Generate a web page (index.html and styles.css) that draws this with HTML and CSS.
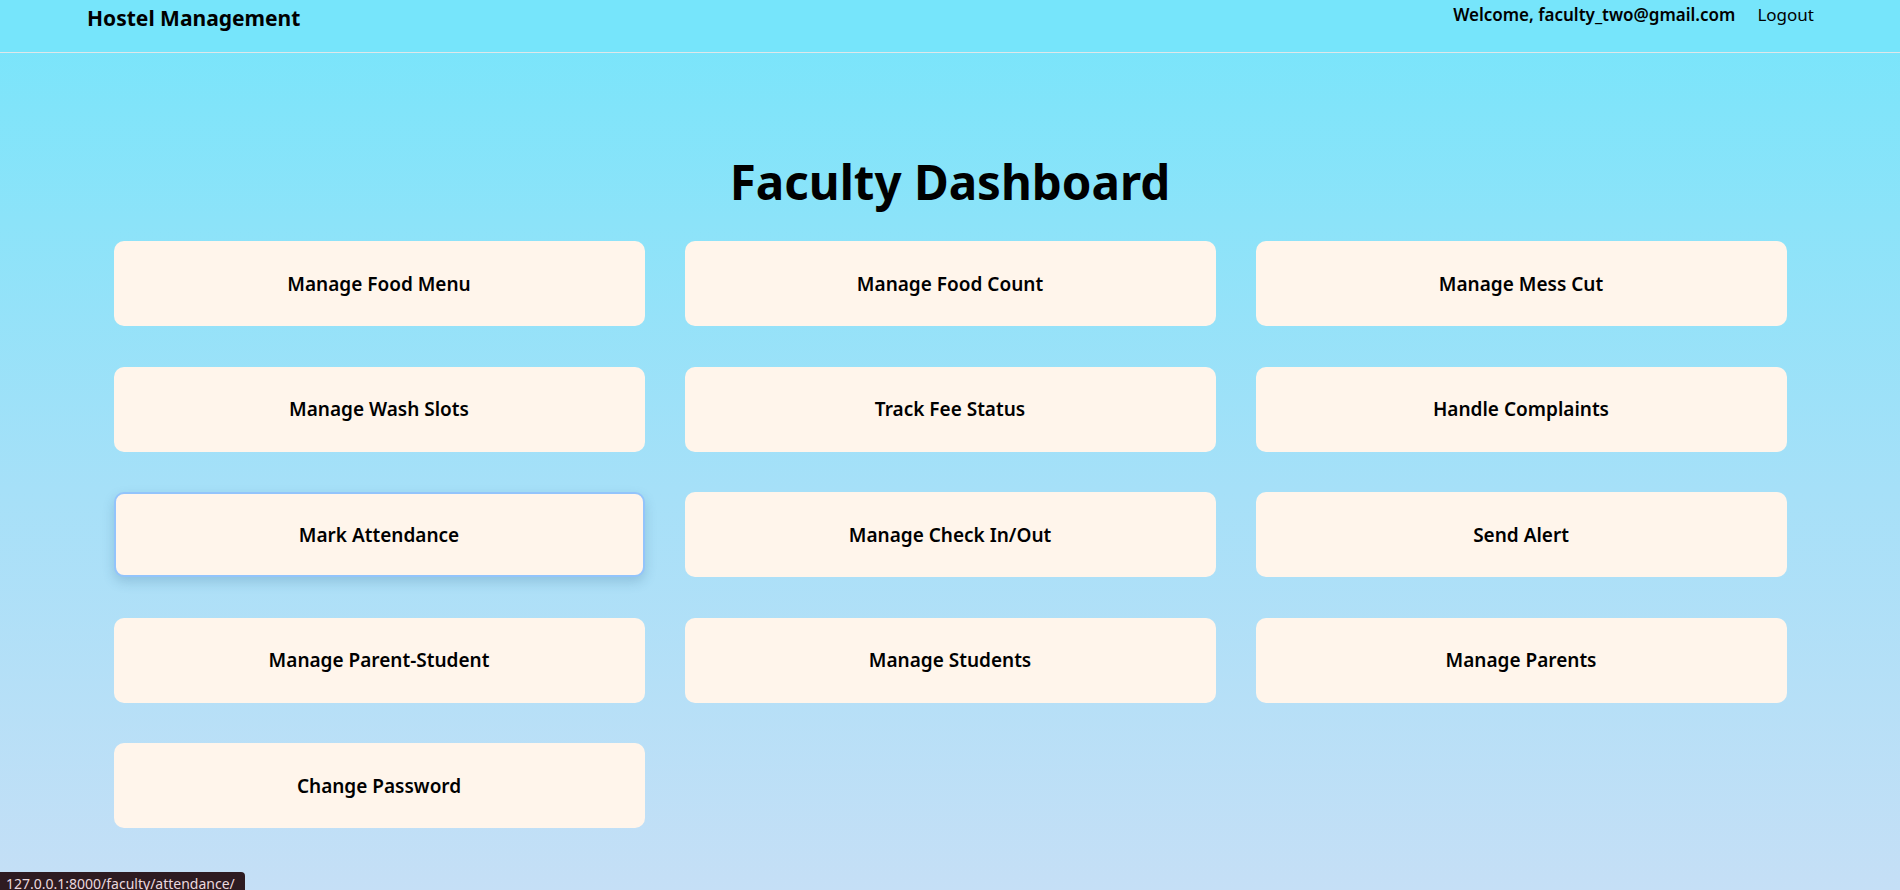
FILE: index.html
```html
<!DOCTYPE html>
<html lang="en">
<head>
<meta charset="utf-8">
<title>Faculty Dashboard</title>
<link rel="stylesheet" href="styles.css">
</head>
<body>
<header class="navbar">
  <a class="brand" href="#">Hostel Management</a>
  <nav class="nav-right">
    <span class="welcome">Welcome, faculty_two@gmail.com</span>
    <a class="logout" href="#">Logout</a>
  </nav>
</header>
<main class="main">
  <h1 class="title">Faculty Dashboard</h1>
  <div class="grid">
    <a class="card" href="#">Manage Food Menu</a>
    <a class="card" href="#">Manage Food Count</a>
    <a class="card" href="#">Manage Mess Cut</a>
    <a class="card" href="#">Manage Wash Slots</a>
    <a class="card" href="#">Track Fee Status</a>
    <a class="card" href="#">Handle Complaints</a>
    <a class="card card-hover" href="#">Mark Attendance</a>
    <a class="card" href="#">Manage Check In/Out</a>
    <a class="card" href="#">Send Alert</a>
    <a class="card" href="#">Manage Parent-Student</a>
    <a class="card" href="#">Manage Students</a>
    <a class="card" href="#">Manage Parents</a>
    <a class="card" href="#">Change Password</a>
  </div>
</main>
<div class="status">127.0.0.1:8000/faculty/attendance/</div>
</body>
</html>
```
FILE: styles.css
```css
html, body {
  margin: 0;
  padding: 0;
}
body {
  min-height: 100vh;
  font-family: "Noto Sans", "Open Sans", sans-serif;
  color: #000;
  background: linear-gradient(to bottom, #76e5fb 0%, #8ce3f9 25%, #a6e0f8 55%, #c5dff6 100%);
  overflow: hidden;
}
a {
  color: inherit;
  text-decoration: none;
}
.navbar {
  height: 53px;
  box-sizing: border-box;
  border-bottom: 1px solid #dfe7ea;
  display: flex;
  justify-content: space-between;
  align-items: flex-start;
  padding: 3px 86px 0 87px;
  background: #76e5fb;
}
.brand {
  font-size: 21px;
  font-weight: 700;
  line-height: 30px;
}
.nav-right {
  display: flex;
  gap: 22px;
  font-size: 17px;
  line-height: 24px;
}
.welcome {
  font-weight: 600;
}
.logout {
  font-weight: 400;
}
.main {
  padding-top: 93px;
}
.title {
  margin: 0 0 24px;
  text-align: center;
  font-size: 47.5px;
  font-weight: 700;
  line-height: 71px;
}
.grid {
  width: 1673px;
  margin: 0 auto;
  display: grid;
  grid-template-columns: repeat(3, 1fr);
  column-gap: 40px;
  row-gap: 40.5px;
}
.card {
  box-sizing: border-box;
  height: 85px;
  display: flex;
  align-items: center;
  justify-content: center;
  background: #fff5eb;
  border: 2px solid transparent;
  border-radius: 10px;
  font-size: 19px;
  font-weight: 600;
}
.card-hover {
  border-color: #93c4fb;
  box-shadow: 0 5px 12px rgba(40, 90, 130, 0.22);
}
.status {
  position: fixed;
  left: 0;
  bottom: -7px;
  height: 25px;
  box-sizing: border-box;
  padding: 1px 10px 0 6px;
  background: #2e1b21;
  color: #ead8de;
  font-size: 14px;
  line-height: 22px;
  border-top-right-radius: 4px;
}
```
